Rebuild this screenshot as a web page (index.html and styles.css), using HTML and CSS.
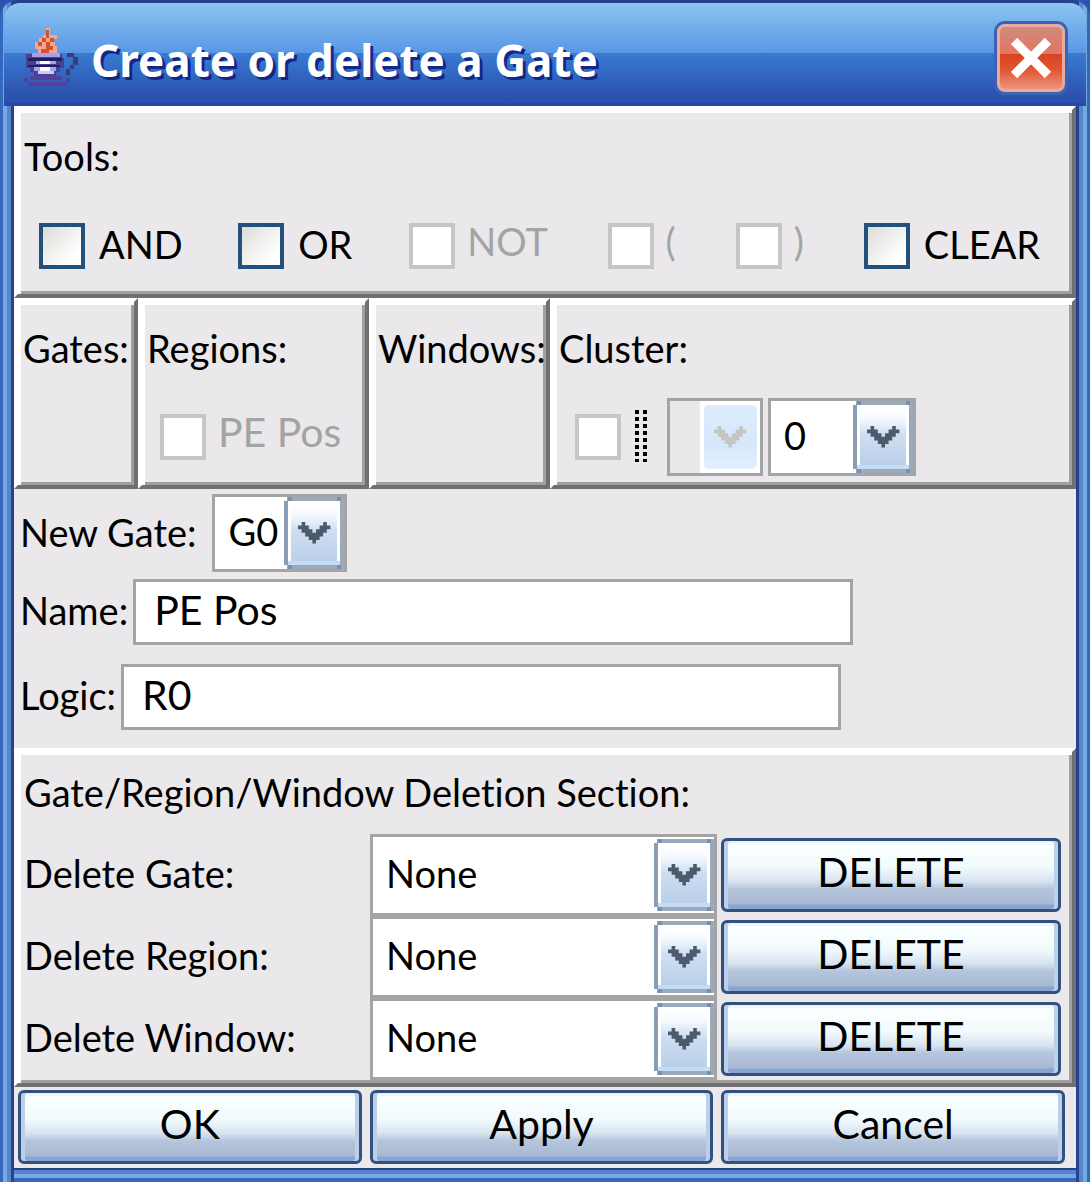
FILE: index.html
```html
<!DOCTYPE html>
<html lang="en">
<head>
<meta charset="utf-8">
<meta name="viewport" content="width=device-width, initial-scale=1">
<title>Create or delete a Gate</title>
<link rel="stylesheet" href="styles.css">
</head>
<body>
<svg width="0" height="0" class="defs" aria-hidden="true">
  <defs>
    <linearGradient id="arrow-face" x1="0" y1="0" x2="0" y2="1">
      <stop offset="0" stop-color="#fff"/><stop offset=".2" stop-color="#f4f9ff"/>
      <stop offset=".45" stop-color="#cfdff3"/><stop offset="1" stop-color="#b8cee8"/>
    </linearGradient>
    <linearGradient id="arrow-face-off" x1="0" y1="0" x2="0" y2="1">
      <stop offset="0" stop-color="#deedfd"/><stop offset=".6" stop-color="#d6e7fc"/><stop offset="1" stop-color="#e3f0fe"/>
    </linearGradient>
    <path id="chevron" transform="translate(14 25) scale(3.6)" d="M1 0h1v1h1v1h1v1h1v-1h1v-1h1v-1h1v1h1v1h-1v1h-1v1h-1v1h-1v1h-1v-1h-1v-1h-1v-1h-1v-1h-1v-1h1z"/>
    <symbol id="arrow" viewBox="0 0 60 72">
      <rect x="0" y="0" width="60" height="72" fill="#9aa9bc"/>
      <rect x="0" y="0" width="3" height="4" fill="#fff"/>
      <rect x="0" y="68" width="3" height="4" fill="#fff"/>
      <rect x="0" y="4" width="4" height="64" fill="#8a9db4"/>
      <rect x="4" y="4" width="52" height="64" fill="#fff"/>
      <rect x="7" y="6" width="46" height="60" fill="url(#arrow-face)"/>
      <rect x="4" y="64" width="52" height="4" fill="#c4dcf6"/>
      <path d="M4 0h4v4H4zM53 0h4v4H53zM4 68h4v4H4zM53 68h4v4H53z" fill="#7690b0"/>
      <use href="#chevron" fill="#4d5a6c"/>
    </symbol>
    <symbol id="arrow-off" viewBox="0 0 60 72">
      <rect width="60" height="72" fill="#fff"/>
      <rect x="4" y="4" width="53" height="64" rx="5" fill="url(#arrow-face-off)"/>
      <use href="#chevron" fill="#c5c5c1"/>
    </symbol>
  </defs>
</svg>
<main class="window">
  <header class="titlebar">
    <svg class="logo" viewBox="0 0 54 60" shape-rendering="crispEdges" aria-hidden="true">
      <path d="M22 0h4v7h4v7h-4v4h-4v7h-4v-4h-4v-7h4v-4h4zM29 7h4v4h-4v7h4v7h-7v-7h-4v-4h4v-4h3z" fill="#f0a890"/>
      <path d="M11 14h4v-4h4v-3h4v7h8v7h-3v4H14v-4h-3z" fill="#f0a890"/>
      <path d="M22 2h3v8h-3v4h-4v4h-4v-4h4v-4h4zM26 10h4v4h-4zM22 14h4v4h3v4h-4v3h-8v-4h5z" fill="#d8502c"/>
      <path d="M2 26h36v4h2v10h-4v4h-4v4H10v-4H6v-4H2z" fill="#4a3f94"/>
      <path d="M8 25h28v4H8zM12 33h20v3H12zM10 39h22v4H10z" fill="#a6a0ee"/>
      <path d="M16 33h10v3H16zM16 39h10v4H16z" fill="#fff"/>
      <path d="M4 30h34v3H4zM4 37h32v2H4z" fill="#20205c"/>
      <path d="M14 43h16v3H14z" fill="#d0c8ff"/>
      <path d="M43 25h7v4h-7zM49 29h5v8h-5zM46 37h4v4h-4zM42 41h4v6h-4z" fill="#353f80"/>
      <path d="M0 50h4v4H0zM6 48h32v4H6zM42 50h4v4h-4zM4 54h40v4H4z" fill="#51409c"/>
    </svg>
    <h1 class="title">Create or delete a Gate</h1>
    <button class="close" type="button" aria-label="Close">
      <svg viewBox="0 0 40 40" aria-hidden="true"><path d="M3 3L37 37M37 3L3 37" stroke="#fff" stroke-width="9" fill="none"/></svg>
    </button>
  </header>
  <form class="content">
    <section class="panel tools">
      <h2 class="heading">Tools:</h2>
      <div class="tool-row">
        <label class="check"><input type="checkbox"><span>AND</span></label>
        <label class="check"><input type="checkbox"><span>OR</span></label>
        <label class="check off"><input type="checkbox" disabled><span>NOT</span></label>
        <label class="check off"><input type="checkbox" disabled><span>(</span></label>
        <label class="check off"><input type="checkbox" disabled><span>)</span></label>
        <label class="check"><input type="checkbox"><span>CLEAR</span></label>
      </div>
    </section>
    <div class="sources">
      <section class="panel"><h2 class="heading">Gates:</h2></section>
      <section class="panel">
        <h2 class="heading">Regions:</h2>
        <div class="source-row"><label class="check off"><input type="checkbox" disabled><span>PE Pos</span></label></div>
      </section>
      <section class="panel"><h2 class="heading">Windows:</h2></section>
      <section class="panel">
        <h2 class="heading">Cluster:</h2>
        <div class="source-row cluster">
          <label class="check off"><input type="checkbox" disabled aria-label="Use cluster">
            <svg class="dots" viewBox="0 0 12 52" shape-rendering="crispEdges" aria-hidden="true"><path d="M2 0V52M10 0V52" stroke="#000" stroke-width="4" stroke-dasharray="4 3"/></svg>
          </label>
          <div class="combo off combo-plot">
            <select disabled aria-label="Cluster plot"><option></option></select>
            <svg class="arrow" aria-hidden="true"><use href="#arrow-off"/></svg>
          </div>
          <div class="combo combo-number">
            <select aria-label="Cluster number"><option>0</option></select>
            <svg class="arrow" aria-hidden="true"><use href="#arrow"/></svg>
          </div>
        </div>
      </section>
    </div>
    <section class="fields">
      <div class="field gate-field">
        <label for="gate">New Gate:</label>
        <div class="combo combo-gate">
          <select id="gate"><option>G0</option></select>
          <svg class="arrow" aria-hidden="true"><use href="#arrow"/></svg>
        </div>
      </div>
      <div class="field"><label for="name">Name:</label><input class="text" id="name" type="text" value="PE Pos"></div>
      <div class="field"><label for="logic">Logic:</label><input class="text" id="logic" type="text" value="R0"></div>
    </section>
    <section class="panel deletion">
      <h2 class="heading">Gate/Region/Window Deletion Section:</h2>
      <div class="delete-row">
        <label for="del-gate">Delete Gate:</label>
        <div class="combo"><select id="del-gate"><option>None</option></select><svg class="arrow" aria-hidden="true"><use href="#arrow"/></svg></div>
        <button class="button" type="button">DELETE</button>
      </div>
      <div class="delete-row">
        <label for="del-region">Delete Region:</label>
        <div class="combo"><select id="del-region"><option>None</option></select><svg class="arrow" aria-hidden="true"><use href="#arrow"/></svg></div>
        <button class="button" type="button">DELETE</button>
      </div>
      <div class="delete-row">
        <label for="del-window">Delete Window:</label>
        <div class="combo"><select id="del-window"><option>None</option></select><svg class="arrow" aria-hidden="true"><use href="#arrow"/></svg></div>
        <button class="button" type="button">DELETE</button>
      </div>
    </section>
    <footer class="actions">
      <button class="button" type="button">OK</button>
      <button class="button" type="button">Apply</button>
      <button class="button" type="button">Cancel</button>
    </footer>
  </form>
</main>
</body>
</html>
```
FILE: styles.css
```css
* { box-sizing: border-box; }
body { margin: 0; background: #2c54ae; }
.defs { position: absolute; }

body, button, input, select {
  font-family: Lato, "Liberation Sans", sans-serif;
  font-size: 38px;
  line-height: 52px;
  font-variant-ligatures: none;
  color: #000;
}

.window {
  min-height: 100vh;
  display: flex;
  flex-direction: column;
  padding: 3px 14px 14px;
  border-radius: 18px 18px 0 0;
  background: linear-gradient(90deg, #3468bc 0, #3468bc 3px, #76a8e8 3px, #76a8e8 7px, #5586cc 7px, #5586cc 11px, #27418e 11px, #27418e 14px, transparent 14px, transparent calc(100% - 14px), #27418e calc(100% - 14px), #27418e calc(100% - 11px), #5586cc calc(100% - 11px), #5586cc calc(100% - 7px), #76a8e8 calc(100% - 7px), #76a8e8 calc(100% - 3px), #3468bc calc(100% - 3px)),
    linear-gradient(0deg, #3468bc 0, #3468bc 4px, #76a8e8 4px, #76a8e8 8px, #5586cc 8px, #5586cc 12px, #27418e 12px);
}

.titlebar {
  display: flex;
  align-items: center;
  height: 103px;
  margin: 0 -10px;
  padding: 14px 20px 0;
  border-bottom: 3px solid #2849a0;
  border-radius: 16px 16px 0 0;
  background: linear-gradient(#8cc4f2 0, #77b2ec 20px, #5a97e4 50px, #397bd2 50px, #2c54b0 90px, #2950ac 100px);
}
.logo { width: 54px; height: 60px; margin-top: -4px; }
.title {
  flex: 1;
  margin: 0 0 0 13px;
  font: bold 44px/52px "Noto Sans", sans-serif;
  color: #fff;
  text-shadow: 3px 3px 0 #12278a;
}
.close {
  display: flex;
  width: 68px;
  height: 68px;
  margin: 0 1px 4px 0;
  padding: 11px;
  border: 3px solid #e9a99f;
  border-radius: 8px;
  background: linear-gradient(#cf8b7c 0, #e27662 27px, #d54420 27px, #e2542e 42px, #ec937e 100%);
  box-shadow: 0 0 0 3px #3c62b6;
}
.close svg { width: 100%; height: 100%; }

.content { flex: 1; background: #eae8ea; }
.panel {
  padding: 3px 4px 3px 6px;
  border: 4px solid;
  border-color: #fff #707070 #707070 #fff;
  box-shadow: inset 3px 3px #fff, inset -3px -3px #a0a0a0;
}
.heading { margin: 0; font-size: 38px; font-weight: normal; line-height: 52px; white-space: nowrap; }

.tools { height: 192px; padding-top: 20px; }
.tool-row {
  display: grid;
  grid-template-columns: 199fr 171fr 198fr 128fr 128fr 204fr;
  padding: 41px 0 0 15px;
}
.check { display: flex; align-items: flex-start; gap: 14px; height: 46px; line-height: 42px; white-space: nowrap; }
.check input {
  appearance: none;
  flex: none;
  width: 46px;
  height: 46px;
  margin: 0;
  border: 4px solid #24507c;
  background: linear-gradient(135deg, #dcdcd7, #fff 80%);
}
.check.off { gap: 12px; color: #a4a4a4; line-height: 36px; }
.check.off input { border-color: #c6c6c6; background: #fff; }

.sources { display: grid; grid-template-columns: 124fr 231fr 181fr 526fr; height: 191px; }
.sources .panel { min-width: 0; padding-top: 20px; padding-right: 0; padding-left: 5px; }
.source-row { display: flex; align-items: center; height: 78px; padding-left: 13px; margin-top: 24px; }
.source-row .check { font-size: 41px; }
.cluster { padding-left: 16px; gap: 5px; }
.cluster .check { gap: 14px; margin-right: 15px; }
.dots { width: 12px; height: 52px; margin-top: -4px; }

.combo { position: relative; height: 78px; border: 3px solid #a4a4a4; background: #fff; }
.combo select {
  appearance: none;
  display: block;
  width: 100%;
  height: 100%;
  padding: 0 60px 4px 13px;
  border: 0;
  border-radius: 0;
  background: transparent;
  opacity: 1;
}
.combo.off { background: #eae8ea; }
.arrow { position: absolute; top: 0; right: 0; width: 60px; height: 100%; pointer-events: none; }
.combo-plot { width: 96px; }
.combo-number { width: 148px; }
.combo-gate { width: 135px; }

.fields { display: flex; flex-direction: column; gap: 19px; height: 259px; padding: 5px 6px; }
.field { display: flex; align-items: center; gap: 5px; height: 66px; white-space: nowrap; }
.gate-field { gap: 16px; align-items: flex-start; line-height: 76px; }
.text { flex: 0 1 720px; min-width: 0; height: 66px; padding: 0 18px 6px; border: 3px solid #a4a4a4; background: #fff; font-size: 41px; }
.field label { padding-bottom: 4px; }

.deletion { padding-top: 14px; padding-bottom: 3px; }
.deletion .heading { margin-bottom: 16px; }
.delete-row { display: grid; grid-template-columns: 346fr 347fr 351fr; height: 82px; align-items: center; }
.delete-row .combo { height: 82px; }
.delete-row .button { margin: 0 7px 0 4px; }
.delete-row label { padding-bottom: 4px; }

.button {
  height: 74px;
  padding: 0 0 6px;
  border: 3px solid #32517f;
  border-radius: 6px;
  background: linear-gradient(#e8f2fc 0, #fbffff 5px, #f2fafc 26px, #d8e4f0 40px, #b4c5dc 48px, #a9b9d2 63px, #88a4d0 64px, #88a4d0 100%);
  box-shadow: inset 4px 0 #bcd0ea, inset -4px 0 #bcd0ea;
  font-size: 41px;
}
.actions { display: grid; grid-template-columns: repeat(3, 1fr); gap: 8px; padding: 3px 11px 4px 4px; }
```
